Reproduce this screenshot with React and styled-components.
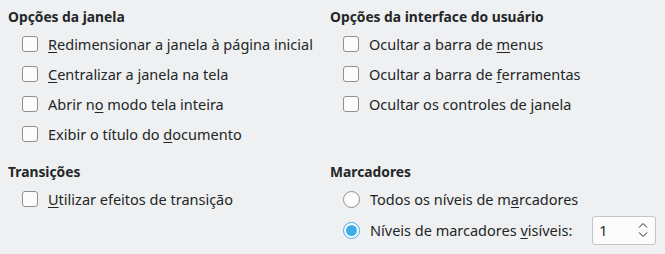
import React from 'react'
import styled, { createGlobalStyle } from 'styled-components'

const Global = createGlobalStyle`
  html, body {
    margin: 0;
    padding: 0;
    background: #eff0f1;
  }
  body {
    font-family: "Noto Sans", "DejaVu Sans", sans-serif;
    font-size: 14.5px;
    color: #232627;
  }
`

const Page = styled.div`
  display: grid;
  grid-template-columns: 322px 1fr;
  padding: 5px 0 0 8px;
  width: 665px;
  height: 254px;
  box-sizing: border-box;
`

const Section = styled.div`
  display: flex;
  flex-direction: column;
  margin-bottom: ${(p) => p.gap || 0}px;
`

const Heading = styled.div`
  height: 24px;
  line-height: 24px;
  font-size: 13.8px;
  font-weight: 700;
`

const Row = styled.label`
  display: flex;
  align-items: center;
  height: ${(p) => p.h || 30}px;
  padding-left: ${(p) => p.indent || 14}px;
  gap: 10px;
  white-space: nowrap;
`

const Box = styled.span`
  width: 14px;
  height: 14px;
  border: 1px solid #8d8f90;
  border-radius: 3px;
  background: #fcfcfc;
  flex: none;
`

const Radio = styled.span`
  width: 15px;
  height: 15px;
  border-radius: 50%;
  border: 1px solid ${(p) => (p.checked ? '#3daee9' : '#8d8f90')};
  background: #fcfcfc;
  flex: none;
  display: flex;
  align-items: center;
  justify-content: center;
  &::after {
    content: '';
    display: ${(p) => (p.checked ? 'block' : 'none')};
    width: 11px;
    height: 11px;
    border-radius: 50%;
    background: #3daee9;
  }
`

const Key = styled.u`
  text-underline-offset: 2px;
`

const Spin = styled.div`
  margin-left: 10px;
  width: 64px;
  height: 29px;
  border: 1px solid #c2c4c5;
  border-radius: 3px;
  background: #fcfcfc;
  display: flex;
  align-items: center;
  justify-content: space-between;
  padding: 0 6px;
  box-sizing: border-box;
`

const Arrows = () => (
  <svg width="12" height="18" viewBox="0 0 12 18" fill="none" stroke="#232627" strokeWidth="1">
    <polyline points="2,6.5 6,2.5 10,6.5" />
    <polyline points="2,11.5 6,15.5 10,11.5" />
  </svg>
)

const Check = ({ children, indent }) => (
  <Row indent={indent}>
    <Box />
    <span>{children}</span>
  </Row>
)

export default function App() {
  return (
    <>
      <Global />
      <Page>
        <Section gap={3}>
          <Heading>Opções da janela</Heading>
          <Check><Key>R</Key>edimensionar a janela à página inicial</Check>
          <Check><Key>C</Key>entralizar a janela na tela</Check>
          <Check>Abrir n<Key>o</Key> modo tela inteira</Check>
          <Check>Exibir o título do <Key>d</Key>ocumento</Check>
        </Section>
        <Section gap={3}>
          <Heading>Opções da interface do usuário</Heading>
          <Check indent={13}>Ocultar a barra de <Key>m</Key>enus</Check>
          <Check indent={13}>Ocultar a barra de <Key>f</Key>erramentas</Check>
          <Check indent={13}>Ocultar os controles de <Key>j</Key>anela</Check>
        </Section>
        <Section>
          <Heading>Transições</Heading>
          <Check><Key>U</Key>tilizar efeitos de transição</Check>
        </Section>
        <Section>
          <Heading>Marcadores</Heading>
          <Row indent={13}>
            <Radio />
            <span>Todos os níveis de m<Key>a</Key>rcadores</span>
          </Row>
          <Row indent={13} h={32}>
            <Radio checked />
            <span>Níveis de marcadores <Key>v</Key>isíveis:</span>
            <Spin>
              <span>1</span>
              <Arrows />
            </Spin>
          </Row>
        </Section>
      </Page>
    </>
  )
}
